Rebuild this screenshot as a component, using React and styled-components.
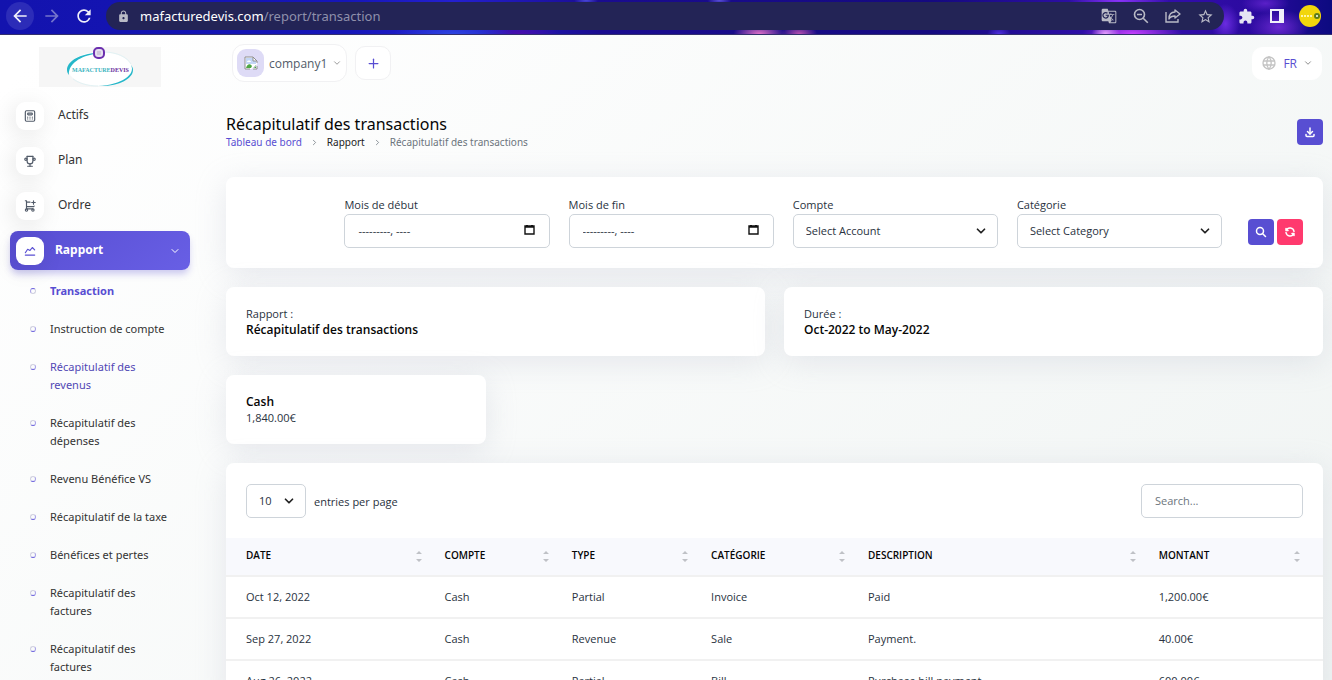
import React, { useState } from 'react';
import styled, { createGlobalStyle, css } from 'styled-components';
import {
  MdArrowBack,
  MdArrowForward,
  MdRefresh,
  MdLock,
  MdGTranslate,
  MdStarBorder,
  MdExtension,
} from 'react-icons/md';
import {
  TbCalculator,
  TbTrophy,
  TbChartLine,
  TbChevronDown,
  TbChevronRight,
  TbDownload,
  TbSearch,
  TbRefresh,
  TbPlus,
  TbWorld,
} from 'react-icons/tb';

const GlobalStyle = createGlobalStyle`
  * {
    box-sizing: border-box;
  }

  body {
    margin: 0;
    font-family: 'Open Sans', 'Liberation Sans', sans-serif;
    font-size: 11px;
    color: #293240;
    background: #fff;
  }

  a {
    text-decoration: none;
  }

  button, input, select {
    font-family: inherit;
    font-size: inherit;
    color: inherit;
  }
`;

const Window = styled.div`
  display: flex;
  flex-direction: column;
  height: 100vh;
  overflow: hidden;
`;

/* Browser bar */

const BrowserBar = styled.header`
  display: flex;
  align-items: center;
  flex-shrink: 0;
  height: 35px;
  padding: 0 11px 2px 6px;
  border-bottom: 1px solid #33306e;
  color: #e4e4f4;
  background:
    radial-gradient(ellipse 26px 12px at 57% 100%, #e070c8, transparent),
    radial-gradient(ellipse 18px 10px at 60% 100%, #b850b0, transparent),
    radial-gradient(ellipse 14px 10px at 83% 100%, #e8a0ff, transparent),
    radial-gradient(ellipse 50px 14px at 85% 100%, #c840ff, transparent),
    radial-gradient(ellipse 50px 14px at 84% 0%, #8a34f8, transparent),
    radial-gradient(ellipse 14px 20px at 92% 70%, #6a2ce0, transparent),
    radial-gradient(ellipse 30px 18px at 96% 80%, #6a28d0, transparent),
    radial-gradient(ellipse 24px 10px at 95% 10%, #5a20c8, transparent),
    radial-gradient(ellipse 12px 8px at 75% 100%, #5030e0, transparent),
    radial-gradient(ellipse 12px 6px at 44% 0%, #4a48d8, transparent),
    radial-gradient(ellipse 12px 6px at 54% 0%, #5a50d8, transparent),
    radial-gradient(ellipse 60px 12px at 34% 100%, #2c44e0, transparent),
    radial-gradient(ellipse 40px 12px at 39% 100%, #4a0cab, transparent),
    linear-gradient(90deg, #1313ae 0%, #1616b8 26%, #2420d0 34%, #1a0c90 45%, #150a80 70%, #3410b0 84%, #2c0aa0 94%, #0c0a80 100%);
`;

const BarButton = styled.button`
  display: flex;
  align-items: center;
  justify-content: center;
  width: 28px;
  height: 28px;
  margin-right: 4px;
  padding: 0;
  border: none;
  border-radius: 50%;
  background: ${(props) => (props.$active ? '#2c2cb8' : 'none')};
  color: ${(props) => (props.$dim ? '#7474cc' : '#f0f0fa')};
`;

const AddressBar = styled.div`
  display: flex;
  align-items: center;
  flex: 1;
  height: 28px;
  margin-left: 4px;
  padding: 0 10px 0 11px;
  border-radius: 14px;
  background: #232456;
  color: #b9bac6;
`;

const Address = styled.span`
  flex: 1;
  margin-left: 10px;
  font-family: 'Noto Sans', sans-serif;
  font-size: 13px;
  color: #8f90ab;

  b {
    font-weight: 400;
    color: #fff;
  }
`;

const AddressIcons = styled.div`
  display: flex;
  align-items: center;
  gap: 16px;
`;

const BarTools = styled.div`
  display: flex;
  align-items: center;
  gap: 15px;
  margin-left: 14px;
`;

const ProfilePicture = styled.div`
  display: flex;
  align-items: center;
  justify-content: flex-end;
  width: 22px;
  height: 22px;
  padding-right: 1px;
  border-radius: 50%;
  background: #f2d60c;
`;

/* Page */

const Page = styled.div`
  display: flex;
  flex: 1;
  min-height: 0;
  background: linear-gradient(141.55deg, rgba(240, 244, 243, 0) 3%, #f0f4f3 100%), #fff;
`;

const Sidebar = styled.nav`
  flex-shrink: 0;
  width: 200px;
  padding: 0 10px;
  overflow: hidden;
  font-family: 'Noto Sans', 'Open Sans', sans-serif;
`;

const LogoLink = styled.a`
  display: flex;
  justify-content: center;
  padding: 12px 0 9px;
`;

const MenuList = styled.ul`
  display: flex;
  flex-direction: column;
  gap: 6px;
  margin: 0;
  padding: 0;
  list-style: none;
`;

const MenuLink = styled.a`
  display: flex;
  align-items: center;
  gap: 14px;
  height: 39px;
  padding: 0 9px 0 6px;
  border-radius: 8px;
  font-size: 12px;
  color: #333;

  ${(props) =>
    props.$active &&
    css`
      gap: 11px;
      color: #fff;
      font-weight: 700;
      background: linear-gradient(141.55deg, #584ed2 3%, #685fe5 100%);
      box-shadow: 0 5px 7px -1px rgba(88, 78, 210, 0.3);
    `}
`;

const MenuIcon = styled.span`
  display: flex;
  align-items: center;
  justify-content: center;
  width: 28px;
  height: 28px;
  border-radius: 9px;
  background: #fff;
  color: ${(props) => (props.$active ? '#584ed2' : '#525b69')};
  box-shadow: -3px 4px 23px rgba(0, 0, 0, 0.1);
`;

const MenuLabel = styled.span`
  flex: 1;
  padding-bottom: 2px;
`;

const SubMenu = styled.ul`
  margin: 0;
  padding: 2px 0 0;
  list-style: none;
`;

const SubLink = styled.a`
  display: flex;
  gap: 14px;
  padding: 10px 14px 10px 20px;
  line-height: 18px;
  color: ${(props) => (props.$tone ? '#5248b5' : '#333')};
  ${(props) => props.$active && 'color: #584ed2; font-weight: 700;'}
`;

const Bullet = styled.span`
  flex-shrink: 0;
  width: 6px;
  height: 6px;
  margin-top: 6px;
  border: 1px solid #d0d0e0;
  border-right-color: #a8a2e8;
  border-bottom-color: #6a60dc;
  border-radius: 50%;
  transform: rotate(${(props) => (props.$active ? '180deg' : '0deg')});
`;

const Main = styled.main`
  flex: 1;
  min-width: 0;
  padding: 9px 9px 0 26px;
`;

const TopBar = styled.div`
  display: flex;
  align-items: center;
  gap: 8px;
  padding-left: 6px;
`;

const CompanyButton = styled.button`
  display: flex;
  align-items: center;
  gap: 5px;
  height: 38px;
  padding: 0 4px;
  border: 1px solid #f1f1f3;
  border-radius: 12px;
  background: #fff;
  font-size: 12px;
  color: #525b69;
`;

const Avatar = styled.span`
  display: flex;
  align-items: center;
  justify-content: center;
  width: 27px;
  height: 28px;
  border-radius: 9px;
  background: #dedbf6;
`;

const AddButton = styled.button`
  display: flex;
  align-items: center;
  justify-content: center;
  width: 36px;
  height: 34px;
  padding: 0;
  border: 1px solid #f1f1f3;
  border-radius: 10px;
  background: #fff;
  color: #584ed2;
`;

const LanguageButton = styled(CompanyButton)`
  gap: 6px;
  height: 33px;
  margin-left: auto;
  margin-right: 1px;
  padding: 0 8px;
  border-color: #fff;
  border-radius: 10px;
  color: #584ed2;
`;

const PageHeader = styled.div`
  display: flex;
  align-items: center;
  justify-content: space-between;
  padding: 31px 0 27px;
  font-family: 'Noto Sans', 'Open Sans', sans-serif;
`;

const Title = styled.h1`
  margin: 0;
  font-size: 16px;
  font-weight: 400;
  line-height: 22px;
  color: #060606;
`;

const Breadcrumb = styled.div`
  display: flex;
  align-items: center;
  gap: 8px;
  font-size: 10px;
  line-height: 15px;
  color: #6c757d;

  a {
    color: #584ed2;
  }

  a + svg + a {
    color: #222;
  }
`;

const SquareButton = styled.button`
  display: flex;
  align-items: center;
  justify-content: center;
  width: 26px;
  height: 26px;
  padding: 0;
  border: none;
  border-radius: 4px;
  color: #fff;
  background: ${(props) => (props.$danger ? '#ff3a6e' : '#584ed2')};
`;

const Sections = styled.div`
  display: flex;
  flex-direction: column;
  gap: 19px;
`;

const Card = styled.section`
  border-radius: 8px;
  background: #fff;
  box-shadow: 0 6px 30px rgba(182, 186, 203, 0.3);
`;

const FilterForm = styled.form`
  display: flex;
  align-items: flex-end;
  gap: 19px;
  padding: 19px 20px 20px 10.8%;
`;

const Field = styled.label`
  flex: 1;
  min-width: 0;
  line-height: 18px;
`;

const inputStyle = css`
  display: block;
  width: 100%;
  height: 34px;
  border: 1px solid #ced4da;
  border-radius: 5px;
  background: #fff;
  outline: none;
`;

const Input = styled.input`
  ${inputStyle}
  padding: 0 13px 1px;

  &::placeholder {
    color: ${(props) => (props.$month ? '#293240' : '#6c757d')};
    opacity: 1;
  }
`;

const Select = styled.select`
  ${inputStyle}
  padding: 0 12px 2px;
  appearance: none;
`;

const SelectBox = styled.span`
  display: block;
  position: relative;
  width: ${(props) => props.$width || 'auto'};

  svg {
    position: absolute;
    top: 10px;
    right: 10px;
    color: #222;
    pointer-events: none;
  }
`;

const MonthBox = styled(SelectBox)`
  svg {
    right: 15px;
  }
`;

const FilterButtons = styled.div`
  display: flex;
  gap: 3px;
  padding: 0 0 3px 7px;
`;

const CardRow = styled.div`
  display: grid;
  grid-template-columns: 1fr 1fr;
  gap: 19px;
`;

const InfoCard = styled(Card)`
  padding: 19px 20px 18px;
  line-height: 16px;
  width: ${(props) => (props.$narrow ? '260px' : 'auto')};

  p {
    margin: 0;
  }

  strong {
    display: block;
    font-size: 12px;
    font-weight: 600;
    color: #060606;
  }
`;

const TableTools = styled.div`
  display: flex;
  align-items: center;
  justify-content: space-between;
  padding: 21px 20px 20px;
`;

const PerPage = styled.label`
  display: flex;
  align-items: center;
  gap: 8px;
`;

const SearchInput = styled(Input)`
  width: 162px;
`;

const Table = styled.table`
  width: 100%;
  border-collapse: collapse;
  table-layout: fixed;
  text-align: left;
`;

const HeadCell = styled.th`
  width: ${(props) => props.$width};
  height: 38px;
  padding: 0 2px 4px 20px;
  border-bottom: 2px solid #f1f1f1;
  background: #f8f9fd;
  font-size: 10px;
  font-weight: 600;
  color: #060606;
  text-transform: uppercase;

  &:last-child {
    padding-right: 22px;
  }
`;

const HeadContent = styled.div`
  display: flex;
  align-items: center;
  justify-content: space-between;
`;

const SortButton = styled.button`
  display: flex;
  padding: 5px 0 0;
  border: none;
  background: none;
  color: #bfc1c6;
`;

const Cell = styled.td`
  height: 42px;
  padding: 0 20px 2px;
  border-bottom: 2px solid #f1f1f1;
`;

const Logo = () => (
  <svg width="122" height="40" viewBox="0 0 122 40" role="img" aria-label="MaFactureDevis">
    <rect width="122" height="40" fill="#f6f6f6" />
    <ellipse cx="61" cy="22" rx="32" ry="17" fill="#fff" />
    <path d="M55 6C38 8 28 15 28 23c0 2 1 4 2 5-1-9 8-18 25-21z" fill="#25b7c9" />
    <path d="M92 18c5 9-9 20-33 21 20 1 35-7 35-16 0-2-1-4-2-5z" fill="#25b7c9" />
    <path d="M34 32c6 4 14 7 25 7M64 5c14 0 24 5 28 12" fill="none" stroke="#e2f2f4" />
    <rect x="55" y="1" width="10" height="10" rx="4" fill="#e6dff0" stroke="#6b2fae" strokeWidth="2" />
    <path d="M58 4h4v4h-4z" fill="#cfc6dc" />
    <text x="33" y="25" fontFamily="Liberation Serif, serif" fontSize="6" fontWeight="700" fill="#3cb4c0">
      MAFACTURE
      <tspan fill="#6b2fa0">DEVIS</tspan>
    </text>
  </svg>
);

const BrokenImage = () => (
  <svg width="14" height="14" viewBox="0 0 14 14">
    <path d="M1 1h8l4 4v8H1z" fill="#fff" />
    <path d="M2 2h7v3h3v3H2z" fill="#c3d6f6" />
    <path d="M3 6c0-2 4-2 4 0z" fill="#fff" />
    <path d="M2 12c1-4 4-5 6-2l-1 2zM9 12l3-3v3z" fill="#4da643" />
    <path d="M13 7V5L9 1H1v12h5M9 1v4h4M13 10v3H9" fill="none" stroke="#8f8f8f" />
    <path d="M7 14l7-6" stroke="#dedbf6" strokeWidth="1" />
  </svg>
);

const ZoomOutIcon = () => (
  <svg width="16" height="16" viewBox="0 0 16 16" fill="none" stroke="currentColor" strokeWidth="1.6">
    <circle cx="6.5" cy="6.5" r="5" />
    <path d="M10.2 10.2l4.6 4.6M4 6.5h5" />
  </svg>
);

const ShareIcon = () => (
  <svg width="16" height="16" viewBox="0 0 16 16" fill="none" stroke="currentColor" strokeWidth="1.4">
    <path d="M1 4v10h12v-3" />
    <path d="M10 2l5 4-5 4V8c-3 0-5 1-6 3 0-4 2-7 6-7z" strokeLinejoin="round" />
  </svg>
);

const SidePanelIcon = () => (
  <svg width="14" height="14" viewBox="0 0 14 14">
    <path d="M0 0h14v14H0zM2 2v10h7V2z" fill="#f0f0fa" fillRule="evenodd" />
  </svg>
);

const CartPlusIcon = ({ size }) => (
  <svg
    width={size}
    height={size}
    viewBox="0 0 24 24"
    fill="none"
    stroke="currentColor"
    strokeWidth="2"
    strokeLinecap="round"
    strokeLinejoin="round"
  >
    <circle cx="6" cy="19" r="2" />
    <circle cx="17" cy="19" r="2" />
    <path d="M17 17H6V3H4M6 5l6 .4M19.1 12l-.5 1H6M15 6h6M18 3v6" />
  </svg>
);

const CalendarIcon = () => (
  <svg width="11" height="12" viewBox="0 0 11 12">
    <path d="M1 2h9v8H1zM1 3h9" fill="none" stroke="#111" strokeWidth="1.4" />
    <path d="M2 1h2v2H2zM7 1h2v2H7z" fill="#111" />
  </svg>
);

const SortIcon = () => (
  <svg width="8" height="12" viewBox="0 0 8 12" fill="currentColor">
    <path d="M4 0l3 3H1zM4 11L1 8h6z" />
  </svg>
);

const menu = [
  { label: 'Actifs', icon: TbCalculator },
  { label: 'Plan', icon: TbTrophy },
  { label: 'Ordre', icon: CartPlusIcon },
  { label: 'Rapport', icon: TbChartLine, active: true },
];

const subMenu = [
  { label: 'Transaction', active: true },
  { label: 'Instruction de compte' },
  { label: 'Récapitulatif des revenus', tone: true },
  { label: 'Récapitulatif des dépenses' },
  { label: 'Revenu Bénéfice VS' },
  { label: 'Récapitulatif de la taxe' },
  { label: 'Bénéfices et pertes' },
  { label: 'Récapitulatif des factures' },
  { label: 'Récapitulatif des factures' },
];

const columns = [
  { label: 'Date', width: '18.1%' },
  { label: 'Compte', width: '11.6%' },
  { label: 'Type', width: '12.7%' },
  { label: 'Catégorie', width: '14.3%' },
  { label: 'Description', width: '26.5%' },
  { label: 'Montant', width: '16.8%' },
];

const transactions = [
  ['Oct 12, 2022', 'Cash', 'Partial', 'Invoice', 'Paid', '1,200.00€'],
  ['Sep 27, 2022', 'Cash', 'Revenue', 'Sale', 'Payment.', '40.00€'],
  ['Aug 26, 2022', 'Cash', 'Partial', 'Bill', 'Purchase bill payment', '600.00€'],
];

const MonthField = ({ label }) => (
  <Field>
    {label}
    <MonthBox>
      <Input $month type="text" placeholder="---------, ----" />
      <CalendarIcon />
    </MonthBox>
  </Field>
);

const App = () => {
  const [search, setSearch] = useState('');

  const rows = transactions.filter((row) =>
    row.join(' ').toLowerCase().includes(search.toLowerCase())
  );

  return (
    <Window>
      <GlobalStyle />
      <BrowserBar>
        <BarButton $active aria-label="Back"><MdArrowBack size={20} /></BarButton>
        <BarButton $dim aria-label="Forward"><MdArrowForward size={20} /></BarButton>
        <BarButton aria-label="Reload"><MdRefresh size={20} /></BarButton>
        <AddressBar>
          <MdLock size={13} />
          <Address><b>mafacturedevis.com</b>/report/transaction</Address>
          <AddressIcons>
            <MdGTranslate size={16} />
            <ZoomOutIcon />
            <ShareIcon />
            <MdStarBorder size={17} />
          </AddressIcons>
        </AddressBar>
        <BarTools>
          <MdExtension size={17} />
          <SidePanelIcon />
          <ProfilePicture>
            <svg width="20" height="6" viewBox="0 0 20 6">
              <path d="M1 3h12" stroke="#fff6a8" strokeWidth="2" strokeDasharray="2 1" />
              <circle cx="17" cy="3" r="2" fill="#fff" stroke="#5d7a1c" strokeWidth="2" />
            </svg>
          </ProfilePicture>
        </BarTools>
      </BrowserBar>

      <Page>
        <Sidebar>
          <LogoLink href="#"><Logo /></LogoLink>
          <MenuList>
            {menu.map(({ label, icon: Icon, active }) => (
              <li key={label}>
                <MenuLink href="#" $active={active}>
                  <MenuIcon $active={active}><Icon size={14} /></MenuIcon>
                  <MenuLabel>{label}</MenuLabel>
                  {active && <TbChevronDown size={12} />}
                </MenuLink>
              </li>
            ))}
          </MenuList>
          <SubMenu>
            {subMenu.map(({ label, active, tone }, index) => (
              <li key={index}>
                <SubLink href="#" $active={active} $tone={tone}>
                  <Bullet $active={active} />
                  <span>{label}</span>
                </SubLink>
              </li>
            ))}
          </SubMenu>
        </Sidebar>

        <Main>
          <TopBar>
            <CompanyButton>
              <Avatar><BrokenImage /></Avatar>
              company1
              <TbChevronDown size={10} color="#888" />
            </CompanyButton>
            <AddButton aria-label="Add"><TbPlus size={15} /></AddButton>
            <LanguageButton>
              <TbWorld size={16} color="#c4c4c4" />
              FR
              <TbChevronDown size={10} color="#777" />
            </LanguageButton>
          </TopBar>

          <PageHeader>
            <div>
              <Title>Récapitulatif des transactions</Title>
              <Breadcrumb>
                <a href="#">Tableau de bord</a>
                <TbChevronRight size={9} />
                <a href="#">Rapport</a>
                <TbChevronRight size={9} />
                <span>Récapitulatif des transactions</span>
              </Breadcrumb>
            </div>
            <SquareButton aria-label="Download">
              <TbDownload size={12} strokeWidth={3} />
            </SquareButton>
          </PageHeader>

          <Sections>
            <Card>
              <FilterForm onSubmit={(e) => e.preventDefault()}>
                <MonthField label="Mois de début" />
                <MonthField label="Mois de fin" />
                <Field>
                  Compte
                  <SelectBox>
                    <Select>
                      <option>Select Account</option>
                      <option>Cash</option>
                    </Select>
                    <TbChevronDown size={14} strokeWidth={3} />
                  </SelectBox>
                </Field>
                <Field>
                  Catégorie
                  <SelectBox>
                    <Select>
                      <option>Select Category</option>
                      <option>Invoice</option>
                      <option>Bill</option>
                    </Select>
                    <TbChevronDown size={14} strokeWidth={3} />
                  </SelectBox>
                </Field>
                <FilterButtons>
                  <SquareButton type="submit" aria-label="Apply">
                    <TbSearch size={12} strokeWidth={3} />
                  </SquareButton>
                  <SquareButton type="reset" $danger aria-label="Reset">
                    <TbRefresh size={12} strokeWidth={3} />
                  </SquareButton>
                </FilterButtons>
              </FilterForm>
            </Card>

            <CardRow>
              <InfoCard>
                <p>Rapport :</p>
                <strong>Récapitulatif des transactions</strong>
              </InfoCard>
              <InfoCard>
                <p>Durée :</p>
                <strong>Oct-2022 to May-2022</strong>
              </InfoCard>
            </CardRow>

            <InfoCard $narrow>
              <strong>Cash</strong>
              <p>1,840.00€</p>
            </InfoCard>

            <Card>
              <TableTools>
                <PerPage>
                  <SelectBox $width="60px">
                    <Select defaultValue="10">
                      <option>5</option>
                      <option>10</option>
                      <option>25</option>
                    </Select>
                    <TbChevronDown size={14} strokeWidth={3} />
                  </SelectBox>
                  entries per page
                </PerPage>
                <SearchInput
                  type="text"
                  aria-label="Search"
                  placeholder="Search..."
                  value={search}
                  onChange={(e) => setSearch(e.target.value)}
                />
              </TableTools>
              <Table>
                <thead>
                  <tr>
                    {columns.map((column) => (
                      <HeadCell key={column.label} $width={column.width}>
                        <HeadContent>
                          {column.label}
                          <SortButton aria-label={`Sort ${column.label}`}><SortIcon /></SortButton>
                        </HeadContent>
                      </HeadCell>
                    ))}
                  </tr>
                </thead>
                <tbody>
                  {rows.map((row) => (
                    <tr key={row[0]}>
                      {row.map((value, index) => (
                        <Cell key={index}>{value}</Cell>
                      ))}
                    </tr>
                  ))}
                </tbody>
              </Table>
            </Card>
          </Sections>
        </Main>
      </Page>
    </Window>
  );
};

export default App;
